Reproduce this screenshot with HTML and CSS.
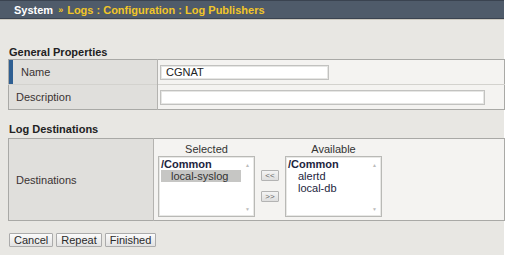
FILE: index.html
```html
<!DOCTYPE html>
<html lang="en">
<head>
	<meta charset="UTF-8">
	<title>Log Publishers</title>
	<link rel="stylesheet" href="styles.css">
</head>
<body>
	<div class="page">
		<div class="header">
			<span class="sys">System</span>
			<span class="sep">&raquo;</span>
			<span class="crumb">Logs : Configuration : Log Publishers</span>
		</div>
		<div class="content">
			<h2>General Properties</h2>
			<table class="props">
				<tr class="req">
					<td class="label"><span class="bar"></span>Name</td>
					<td class="value"><input class="name" type="text" value="CGNAT"></td>
				</tr>
				<tr>
					<td class="label">Description</td>
					<td class="value"><input class="desc" type="text" value=""></td>
				</tr>
			</table>

			<h2 class="second">Log Destinations</h2>
			<table class="props dest">
				<tr>
					<td class="label">Destinations</td>
					<td class="value">
						<div class="picker">
							<div class="col">
								<div class="cap">Selected</div>
								<div class="list">
									<div class="grp">/Common</div>
									<div class="item on">local-syslog</div>
									<span class="up">&#9650;</span>
									<span class="dn">&#9660;</span>
								</div>
							</div>
							<div class="moves">
								<button class="mv">&lt;&lt;</button>
								<button class="mv">&gt;&gt;</button>
							</div>
							<div class="col">
								<div class="cap">Available</div>
								<div class="list">
									<div class="grp">/Common</div>
									<div class="item">alertd</div>
									<div class="item">local-db</div>
									<span class="up">&#9650;</span>
									<span class="dn">&#9660;</span>
								</div>
							</div>
						</div>
					</td>
				</tr>
			</table>

			<div class="actions">
				<button class="btn">Cancel</button>
				<button class="btn">Repeat</button>
				<button class="btn">Finished</button>
			</div>
		</div>
	</div>
</body>
</html>
```

FILE: styles.css
```css
body {
	margin: 0;
	background: #fff;
	font-family: "Liberation Sans", Arial, sans-serif;
	font-size: 11px;
	color: #333;
}
.page {
	width: 504px;
	height: 255px;
	background: #e8e7e3;
}
.header {
	height: 17px;
	background: #4f5b6a;
	border-top: 1px solid #3a4350;
	border-bottom: 1px solid #3a4350;
	box-shadow: 0 1px 0 #cdc9c0;
	display: flex;
	align-items: center;
	padding-left: 14px;
	font-weight: bold;
	font-size: 11px;
}
.sys { color: #fff; }
.sep {
	color: #f2c628;
	font-size: 9px;
	margin: 0 4px 0 5px;
}
.crumb { color: #f2c628; }

.content {
	padding-left: 8px;
}
h2 {
	margin: 27px 0 0 1px;
	font-size: 11px;
	line-height: 13px;
	font-weight: bold;
	color: #222;
}
h2.second {
	margin: 13px 0 2px 1px;
}
table.props {
	width: 497px;
	border-collapse: collapse;
	border: 1px solid #a9a9a6;
}
.props td {
	padding: 0;
	box-sizing: border-box;
}
.props tr + tr td {
	border-top: 1px solid #d3d2ce;
}
.props td.label {
	width: 149px;
	height: 25px;
	background: #e0dfdc;
	border-right: 1px solid #b4b3b0;
	padding-left: 7px;
	color: #3a3333;
	position: relative;
}
.props tr.req td.label {
	padding-left: 12px;
}
.bar {
	position: absolute;
	left: 0;
	top: 0;
	bottom: 0;
	width: 4px;
	background: #2f5f92;
}
.props td.value {
	background: #f4f3f1;
	padding-left: 2px;
}
input {
	font-family: "Liberation Sans", Arial, sans-serif;
	font-size: 11px;
	color: #222;
	height: 15px;
	border: 1px solid #c2c2c0;
	box-shadow: inset 0 0 0 1px #e6e6e4;
	padding: 0 5px;
	margin: 0;
	box-sizing: border-box;
	display: block;
	background: #fff;
}
input.name { width: 169px; }
input.desc { width: 325px; }

.dest td.label {
	width: 145px;
	height: 82px;
}
.dest td.value {
	padding-left: 4px;
}
.picker {
	display: flex;
	align-items: flex-end;
	padding: 4px 0 3px 0;
}
.cap {
	text-align: center;
	color: #333;
	line-height: 13px;
}
.list {
	position: relative;
	width: 97px;
	height: 61px;
	background: #fff;
	border: 1px solid #b9b9b6;
	box-shadow: inset 0 0 0 1px #e8e8e6;
	box-sizing: border-box;
	padding: 1px 2px;
	color: #1d2540;
	line-height: 12px;
	white-space: nowrap;
}
.grp {
	font-weight: bold;
}
.item {
	padding-left: 10px;
	margin-right: 11px;
}
.item.on {
	background: #c6c6c4;
	color: #333;
}
.up, .dn {
	position: absolute;
	right: 4px;
	font-size: 5px;
	color: #bbb;
	line-height: 6px;
}
.up { top: 5px; }
.dn { bottom: 4px; }
.moves {
	display: flex;
	flex-direction: column;
	gap: 10px;
	margin: 0 6px 15px 6px;
}
button.mv {
	width: 18px;
	height: 11px;
	padding: 0;
	font-family: "Liberation Sans", Arial, sans-serif;
	font-size: 8px;
	line-height: 9px;
	color: #666;
	background: linear-gradient(#f4f4f4, #dedede);
	border: 1px solid #b3b3b3;
	border-radius: 1px;
}
.actions {
	display: flex;
	gap: 3px;
	margin-top: 12px;
	padding-left: 1px;
}
.btn {
	height: 14px;
	padding: 0 4px;
	font-family: "Liberation Sans", Arial, sans-serif;
	font-size: 11px;
	line-height: 12px;
	color: #2a2a2a;
	background: linear-gradient(#fbfbfb, #e2e2e2);
	border: 1px solid #ababab;
	border-radius: 1px;
}
```
